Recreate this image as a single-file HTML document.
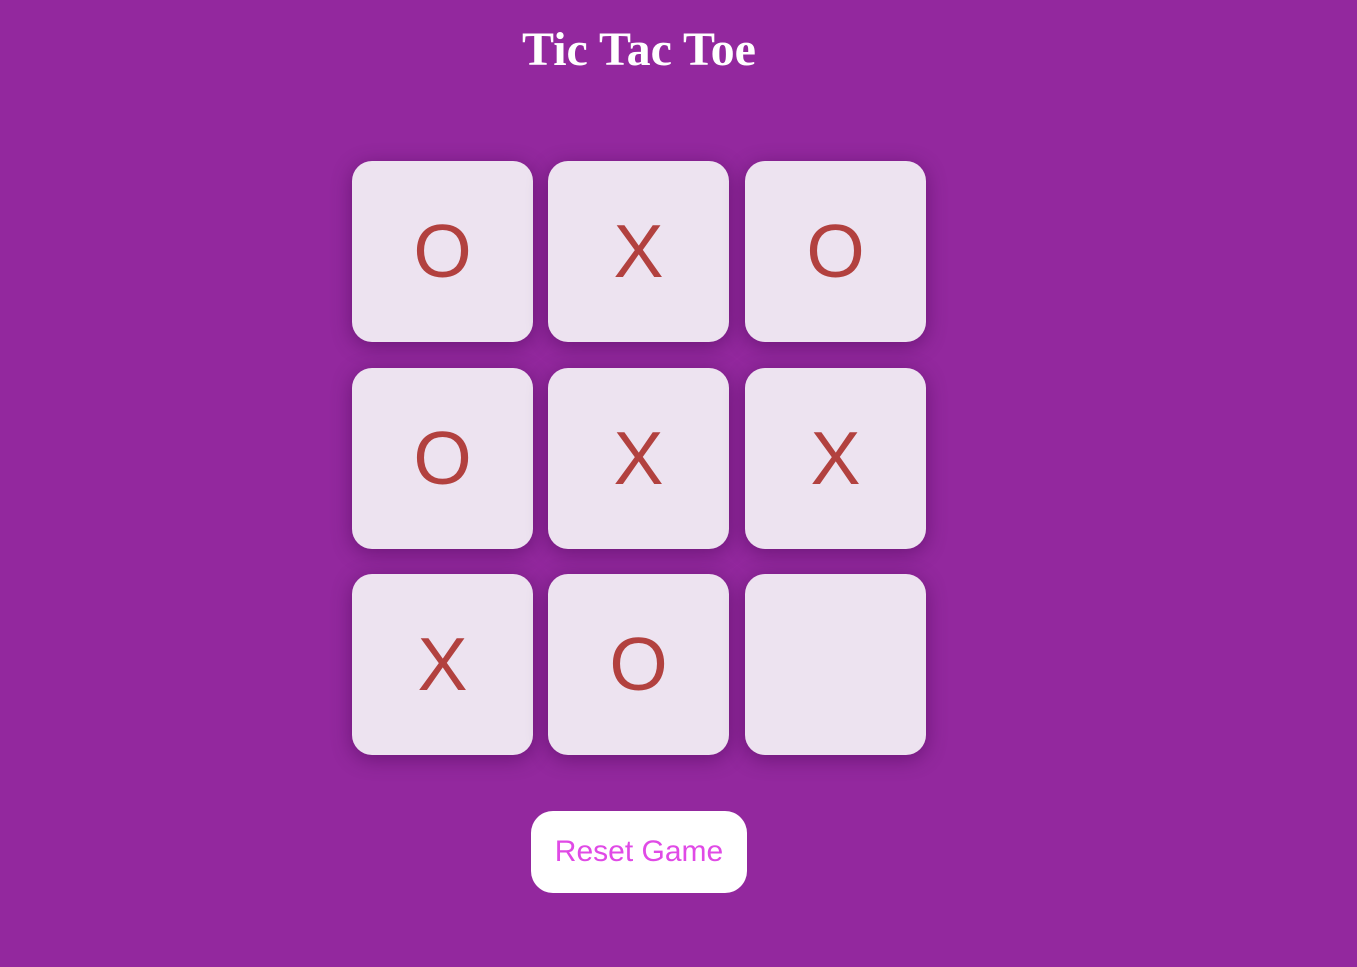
<!DOCTYPE html>
<html><head><style>
body{margin:0;width:1357px;height:967px;background:#93289e;font-family:"Liberation Sans",sans-serif;position:relative;overflow:hidden}
h1{position:absolute;top:22px;left:0;width:1278px;text-align:center;margin:0;font-family:"Liberation Serif",serif;font-weight:bold;font-size:48px;color:#fff;line-height:56px}
.c{position:absolute;width:181px;height:181px;background:#ede3f0;border-radius:20px;box-shadow:0 4px 20px rgba(60,0,70,.45);color:#b2413f;font-size:75px;line-height:181px;text-align:center}
.b{position:absolute;left:531px;top:811px;width:216px;height:82px;background:#fff;border-radius:22px;color:#e04ae6;font-size:30px;line-height:82px;text-align:center}
</style></head><body>
<h1>Tic Tac Toe</h1>
<div class="c" style="left:352px;top:161px">O</div>
<div class="c" style="left:548px;top:161px">X</div>
<div class="c" style="left:745px;top:161px">O</div>
<div class="c" style="left:352px;top:368px">O</div>
<div class="c" style="left:548px;top:368px">X</div>
<div class="c" style="left:745px;top:368px">X</div>
<div class="c" style="left:352px;top:574px">X</div>
<div class="c" style="left:548px;top:574px">O</div>
<div class="c" style="left:745px;top:574px"></div>
<div class="b">Reset Game</div>
</body></html>
